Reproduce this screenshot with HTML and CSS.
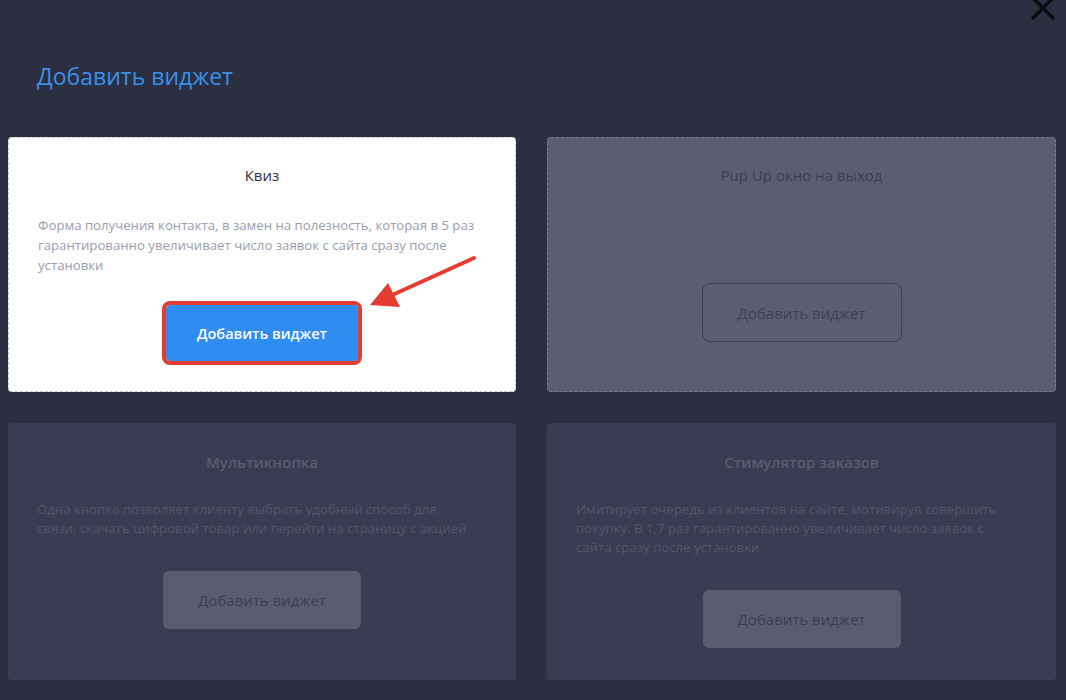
FILE: index.html
```html
<!DOCTYPE html>
<html lang="ru">
<head>
    <meta charset="UTF-8">
    <title>Добавить виджет</title>
    <link rel="stylesheet" href="styles.css">
</head>
<body>

<!-- Close button in the corner -->
<svg class="close" width="26" height="26" viewBox="0 0 26 26">
    <path d="M3 3 L23 23 M23 3 L3 23" stroke="#0b0b10" stroke-width="3.5" stroke-linecap="round"/>
</svg>

<h1 class="page_title">Добавить виджет</h1>

<div class="widgets">
    <!-- Active widget -->
    <div class="widget widget_active">
        <div class="widget_title">Квиз</div>
        <p class="widget_desc">Форма получения контакта, в замен на полезность, которая в 5 раз<br>гарантированно увеличивает число заявок с сайта сразу после<br>установки</p>
        <button class="widget_btn btn_primary">Добавить виджет</button>
    </div>

    <div class="widget widget_muted">
        <div class="widget_title">Pup Up окно на выход</div>
        <button class="widget_btn btn_outline">Добавить виджет</button>
    </div>

    <div class="widget widget_dim">
        <div class="widget_title">Мультикнопка</div>
        <p class="widget_desc">Одна кнопка позволяет клиенту выбрать удобный способ для<br>связи, скачать цифровой товар или перейти на страницу с акцией</p>
        <button class="widget_btn btn_dim">Добавить виджет</button>
    </div>

    <div class="widget widget_dim">
        <div class="widget_title">Стимулятор заказов</div>
        <p class="widget_desc">Имитирует очередь из клиентов на сайте, мотивируя совершить<br>покупку. В 1,7 раз гарантированно увеличивает число заявок с<br>сайта сразу после установки</p>
        <button class="widget_btn btn_dim">Добавить виджет</button>
    </div>
</div>

<!-- Annotation arrow pointing at the button -->
<svg class="arrow" width="130" height="70" viewBox="0 0 130 70">
    <path d="M114 8 L30 46" stroke="#e53b31" stroke-width="4" stroke-linecap="round"/>
    <path d="M10 55 L28 33 L40 57 Z" fill="#e53b31"/>
</svg>

</body>
</html>
```

FILE: styles.css
```css
*, *::before, *::after {
    box-sizing: border-box;
}

body {
    margin: 0;
    position: relative;
    min-height: 700px;
    background: #2c2f41;
    font-family: "Open Sans", "Noto Sans", sans-serif;
}

/* Close icon sits partly above the window */
.close {
    position: absolute;
    top: -5px;
    right: 10px;
}

.page_title {
    margin: 0;
    padding: 61px 37px 0;
    font-size: 23px;
    font-weight: 400;
    line-height: 30px;
    color: #3a8fe8;
}

/* Two by two grid of widget cards */
.widgets {
    display: grid;
    grid-template-columns: 508px 509px;
    grid-template-rows: 255px 257px;
    column-gap: 31px;
    row-gap: 31px;
    margin-top: 46px;
    padding-left: 8px;
}

.widget {
    display: flex;
    flex-direction: column;
    align-items: center;
    padding: 27px 29px 0;
    border-radius: 4px;
}

.widget_title {
    font-size: 15px;
    line-height: 20px;
}

.widget_desc {
    align-self: stretch;
    margin: 0;
    font-size: 13.2px;
}

.widget_btn {
    border: none;
    font-family: inherit;
    font-size: 15px;
    cursor: pointer;
}

/* First card - white */
.widget_active {
    background: #fff;
    border: 1px dashed #c8c9d0;
}
.widget_active .widget_title {
    color: #2d3142;
}
.widget_active .widget_desc {
    margin-top: 30px;
    line-height: 20px;
    color: #9a9cb0;
}

.btn_primary {
    width: 192px;
    height: 56px;
    margin-top: 30px;
    background: #2f8cf0;
    color: #fff;
    font-size: 14.5px;
    font-weight: 600;
    border-radius: 4px;
    outline: 4px solid #e33c32;
    outline-offset: 0;
}

/* Second card - grey */
.widget_muted {
    background: #5b5e70;
    border: 1px dashed #7a7d8e;
}
.widget_muted .widget_title {
    color: #3b3e52;
}

.btn_outline {
    width: 200px;
    height: 59px;
    margin-top: 98px;
    background: transparent;
    border: 1px solid #3b3e52;
    border-radius: 8px;
    color: #3d4054;
}

/* Bottom cards - dimmed */
.widget_dim {
    background: #393c52;
    padding-top: 29px;
}
.widget_dim .widget_title {
    color: #5a5d71;
    font-weight: 600;
}
.widget_dim .widget_desc {
    margin-top: 28px;
    line-height: 19px;
    color: #54576c;
}

.btn_dim {
    width: 198px;
    height: 58px;
    margin-top: 33px;
    background: #5a5d71;
    border-radius: 6px;
    color: #3b3e51;
}

/* Red annotation arrow */
.arrow {
    position: absolute;
    left: 360px;
    top: 250px;
}
```
